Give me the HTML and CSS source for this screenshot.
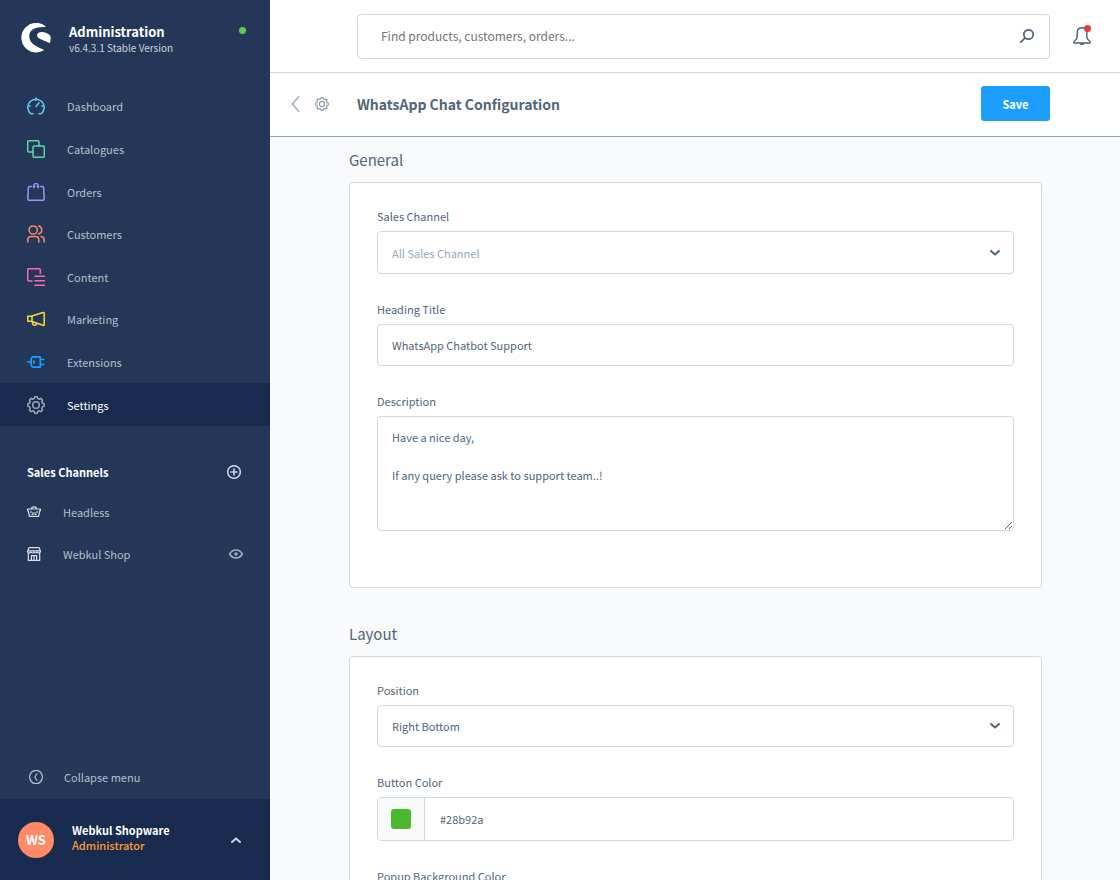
FILE: index.html
```html
<!DOCTYPE html>
<html lang="en">
<head>
<meta charset="utf-8">
<title>WhatsApp Chat Configuration</title>
<link rel="stylesheet" href="styles.css">
</head>
<body>
<svg class="sprite" aria-hidden="true">
  <symbol id="gear" viewBox="0 0 24 24">
    <path d="M9.8 3.3L10.2 1.1H13.8L14.2 3.3L16.6 4.3L18.43 3.02L20.98 5.57L19.7 7.4L20.7 9.8L22.9 10.2V13.8L20.7 14.2L19.7 16.6L20.98 18.43L18.43 20.98L16.6 19.7L14.2 20.7L13.8 22.9H10.2L9.8 20.7L7.4 19.7L5.57 20.98L3.02 18.43L4.3 16.6L3.3 14.2L1.1 13.8V10.2L3.3 9.8L4.3 7.4L3.02 5.57L5.57 3.02L7.4 4.3Z"/>
    <circle cx="12" cy="12" r="4.4"/>
  </symbol>
  <symbol id="chevron" viewBox="0 0 10 6"><path d="M1 1L5 4.6L9 1"/></symbol>
</svg>

<aside class="sidebar">
  <header class="brand">
    <svg class="brand-logo" viewBox="0 0 30 30" aria-hidden="true">
      <path d="M24.6 3.3A14.8 14.8 0 1 0 23.3 27C18 24.6 8.5 21.5 8.2 13.5C8 6.5 15 3.4 24.6 4Z"/>
      <path d="M16 12C16 9.5 20 8.6 23 9.2C26.5 10 29 11.5 29.6 13.5C29.9 16 29.5 18 28.7 20.2C25 18 20 17 17.5 15C16.5 14.2 16 13.2 16 12Z"/>
    </svg>
    <div class="brand-text">
      <span class="brand-name">Administration</span>
      <span class="brand-version">v6.4.3.1 Stable Version</span>
    </div>
    <span class="status-dot"></span>
  </header>

  <nav class="menu">
    <a class="menu-item" href="#"><svg class="icon icon-cyan" viewBox="0 0 18 18"><path d="M6 16.7H3.8A8.2 8.2 0 1 1 14.2 16.7H12M9 1v2.2M1 9h2.2M14.8 9H17M9 9.4l3-3.6"/></svg>Dashboard</a>
    <a class="menu-item" href="#"><svg class="icon icon-green" viewBox="0 0 18 18"><rect x="6" y="6" width="11.3" height="11.3" rx="1.3"/><path d="M6 12H2Q.7 12 .7 10.7V2Q.7.7 2 .7H10.7Q12 .7 12 2V6"/></svg>Catalogues</a>
    <a class="menu-item" href="#"><svg class="icon icon-purple" viewBox="0 0 18 18"><path d="M4.6 3.4H2.6Q1.5 3.4 1.4 4.5L.8 15.8Q.8 17.3 2.2 17.3H15.8Q17.2 17.3 17.2 15.8L16.6 4.5Q16.5 3.4 15.4 3.4H13.4M6.8 4.7V2.8A2.2 2.2 0 0 1 11.2 2.8V4.7M6.8 3.4h1M10.2 3.4h1"/></svg>Orders</a>
    <a class="menu-item" href="#"><svg class="icon icon-orange" viewBox="0 0 18 18"><circle cx="6.2" cy="5" r="4.1"/><path d="M.8 17V15Q.8 11.6 4.2 11.6H8.4Q11.8 11.6 11.8 15V17M11.6 1A4.1 4.1 0 0 1 11.6 9M14 11.6Q17.2 12 17.2 15.2V17"/></svg>Customers</a>
    <a class="menu-item" href="#"><svg class="icon icon-pink" viewBox="0 0 18 18"><path d="M5 13H2Q.7 13 .7 11.7V2Q.7.7 2 .7H12Q13.3.7 13.3 2V5.2M8 8.3H18M8 12.8H18M8 17.3H18"/></svg>Content</a>
    <a class="menu-item" href="#"><svg class="icon icon-yellow" viewBox="0 0 18 18"><path d="M5 6L16 2.5Q17.2 2.2 17.2 3.4V14.5Q17.2 15.7 16 15.3L5 11.5ZM5 6.3H.8V11.2H5M5.5 11.8V13.6Q5.8 15.2 8 15.2Q9.6 15 9.6 13.2"/></svg>Marketing</a>
    <a class="menu-item" href="#"><svg class="icon icon-blue" viewBox="0 0 18 18"><path d="M.3 9H4M6 3.9H13.3V14.1H6Q4.2 13.5 4.2 11.8V6.2Q4.2 4.5 6 3.9ZM13.3 6.5H16.8M13.3 11.5H16.8M6.9 8v2"/></svg>Extensions</a>
    <a class="menu-item is-active" href="#"><svg class="icon icon-grey"><use href="#gear"/></svg>Settings</a>
  </nav>

  <section class="channels">
    <div class="channels-head">
      <h2 class="channels-title">Sales Channels</h2>
      <button class="icon-button" type="button" aria-label="Add sales channel"><svg class="icon-small stroke-heavy" viewBox="0 0 14 14"><circle cx="7" cy="7" r="6.3"/><path d="M7 4v6M4 7h6"/></svg></button>
    </div>
    <a class="channel" href="#"><svg class="icon-small" viewBox="0 0 14 14"><path d="M.6 4H13.4V5.6H12.8L11.6 11.4H2.4L1.2 5.6H.6ZM4.6 4V3.4Q4.6 1.8 7 1.8T9.4 3.4V4M4 6.4v1M6 7.6v1M8 7.6v1M10 6.4v1M5 9.3h1M8 9.3h1"/></svg>Headless</a>
    <a class="channel" href="#"><svg class="icon-small" viewBox="0 0 14 14"><path d="M1.3 6V13.4H12.7V6M2 .6H12L13.4 4V5Q12 7 10.2 5.2Q8.6 6.8 7 5.2Q5.4 6.8 3.8 5.2Q2 7 .6 5V4ZM.8 3.8H13.2M4.4 13V8.6H9.6V13M7 8.6V13"/></svg><span class="channel-name">Webkul Shop</span><svg class="icon-eye" viewBox="0 0 14 10"><path d="M.6 5Q3 1 7 1T13.4 5Q11 9 7 9T.6 5Z"/><circle cx="7" cy="5" r="1"/></svg></a>
  </section>

  <button class="collapse" type="button"><svg class="icon-small" viewBox="0 0 14 14"><ellipse cx="7" cy="7" rx="6.4" ry="6.7"/><path d="M7.8 3.8L5.9 7L7.8 10.2"/></svg>Collapse menu</button>

  <button class="user" type="button">
    <span class="avatar">WS</span>
    <span class="user-text">
      <span class="user-name">Webkul Shopware</span>
      <span class="user-role">Administrator</span>
    </span>
    <svg class="chevron chevron-up"><use href="#chevron"/></svg>
  </button>
</aside>

<div class="page">
  <header class="topbar">
    <form class="search">
      <input class="search-input" type="search" aria-label="Search" placeholder="Find products, customers, orders...">
      <button class="icon-button" type="submit" aria-label="Search"><svg class="icon-small icon-search" viewBox="0 0 14 14"><circle cx="8.5" cy="5.5" r="4.7"/><path d="M5.1 8.9L.8 13.2"/></svg></button>
    </form>
    <button class="icon-button bell" type="button" aria-label="Notifications"><svg class="icon-bell" viewBox="0 0 18 18"><path d="M9 .8Q13.8.8 13.8 6V9.4Q13.8 11.6 15.6 13Q17.3 14.2 17.2 15.9H.8Q.7 14.2 2.4 13Q4.2 11.6 4.2 9.4V6Q4.2.8 9 .8ZM7.2 16.4Q9 18.2 10.8 16.4"/></svg><span class="bell-dot"></span></button>
  </header>

  <div class="titlebar">
    <nav class="title-nav">
      <a class="back" href="#" aria-label="Back"><svg class="icon-back" viewBox="0 0 8 16"><path d="M7.5.7L.8 8L7.5 15.3"/></svg></a>
      <a class="back" href="#" aria-label="Settings"><svg class="icon-small"><use href="#gear"/></svg></a>
    </nav>
    <h1 class="title">WhatsApp Chat Configuration</h1>
    <button class="save" type="submit" form="config">Save</button>
  </div>

  <main class="content">
    <form class="config" id="config">
      <section class="group">
        <h2 class="group-title">General</h2>
        <div class="card">
          <div class="field">
            <label class="label" for="channel">Sales Channel</label>
            <div class="select-wrap">
              <select class="control control-entity" id="channel"><option>All Sales Channel</option></select>
              <svg class="chevron select-chevron"><use href="#chevron"/></svg>
            </div>
          </div>
          <div class="field">
            <label class="label" for="heading">Heading Title</label>
            <input class="control" id="heading" type="text" value="WhatsApp Chatbot Support">
          </div>
          <div class="field">
            <label class="label" for="description">Description</label>
            <textarea class="control control-area" id="description">Have a nice day,

If any query please ask to support team..!</textarea>
          </div>
        </div>
      </section>

      <section class="group">
        <h2 class="group-title">Layout</h2>
        <div class="card">
          <div class="field">
            <label class="label" for="position">Position</label>
            <div class="select-wrap">
              <select class="control" id="position"><option>Right Bottom</option></select>
              <svg class="chevron select-chevron"><use href="#chevron"/></svg>
            </div>
          </div>
          <div class="field">
            <label class="label" for="button-color">Button Color</label>
            <div class="color">
              <button class="color-picker" type="button" aria-label="Pick button color"><span class="swatch"></span></button>
              <input class="color-input" id="button-color" type="text" value="#28b92a">
            </div>
          </div>
          <div class="field">
            <label class="label" for="popup-color">Popup Background Color</label>
            <div class="color">
              <button class="color-picker" type="button" aria-label="Pick popup background color"><span class="swatch"></span></button>
              <input class="color-input" id="popup-color" type="text">
            </div>
          </div>
        </div>
      </section>
    </form>
  </main>
</div>
</body>
</html>
```

FILE: styles.css
```css
* { box-sizing: border-box; }

body {
  margin: 0;
  display: flex;
  height: 100vh;
  overflow: hidden;
  background: #f9fafb;
  color: #52667a;
  font: 11px/18px "Noto Sans CJK SC", "Noto Sans", sans-serif;
}

h1, h2 { margin: 0; font-weight: 400; }
a { color: inherit; text-decoration: none; }
button, input, select, textarea { font: inherit; color: inherit; }
button { border: 0; padding: 0; background: none; text-align: left; cursor: pointer; }
svg { display: block; flex: none; fill: none; stroke: currentColor; stroke-linecap: round; stroke-linejoin: round; }

.sprite { position: absolute; width: 0; height: 0; }

/* Sidebar */
.sidebar {
  flex: none;
  width: 270px;
  display: flex;
  flex-direction: column;
  background: #243758;
  color: #b3bfcc;
}

.brand { display: flex; align-items: flex-start; padding: 23px 24px 0 21px; height: 85px; }
.brand-logo { width: 30px; height: 30px; fill: #fff; stroke: none; }
.brand-text { flex: 1; display: flex; flex-direction: column; margin-left: 18px; }
.brand-name { color: #fff; font-size: 13px; font-weight: 700; }
.brand-version { color: #c8d1dc; font-size: 10px; line-height: 14px; }
.status-dot { width: 7px; height: 7px; margin-top: 4px; border-radius: 50%; background: #54d142; }

.menu { display: grid; grid-auto-rows: 1fr; height: 341px; }
.menu-item { display: flex; align-items: center; gap: 22px; padding-left: 27px; }
.menu-item.is-active { background: #182a4d; color: #fff; }

.icon { width: 18px; height: 18px; stroke-width: 1.5px; }
.icon-cyan { color: #62cbe8; }
.icon-green { color: #57d9a3; }
.icon-purple { color: #a092f0; }
.icon-orange { color: #f88962; }
.icon-pink { color: #ff68b4; }
.icon-yellow { color: #ffd53d; }
.icon-blue { color: #189eff; stroke-width: 1.7px; }
.icon-grey { color: #9aa8b5; stroke-width: 2px; }
.icon-small { width: 14px; height: 14px; stroke-width: 1.2px; }
.stroke-heavy { stroke-width: 1.6px; }
.icon-button { display: flex; }

.channels { padding: 26px 27px 0; }
.channels-head { display: flex; align-items: center; justify-content: space-between; height: 39px; padding-right: 2px; color: #fff; }
.channels-head .icon-button { color: #c8d4e6; }
.channels-title { font-size: 11px; font-weight: 700; }
.channel { display: flex; align-items: center; gap: 22px; height: 42px; }
.channel .icon-small { color: #d8e0ea; }
.channel-name { flex: 1; }
.icon-eye { width: 14px; height: 10px; stroke-width: 1.5px; color: #9fb0c6; }

.collapse { display: flex; align-items: center; gap: 21px; height: 43px; margin-top: auto; padding: 0 0 1px 29px; }

.user { display: flex; align-items: center; gap: 18px; padding: 0 29px 0 18px; height: 81px; background: #182a4d; }
.avatar { width: 36px; height: 36px; border-radius: 50%; background: #ff8a65; color: #fff; font-size: 13px; font-weight: 700; line-height: 36px; text-align: center; }
.user-text { flex: 1; display: flex; flex-direction: column; padding-bottom: 6px; }
.user-name { color: #fff; font-weight: 700; line-height: 16px; }
.user-role { color: #ff9a33; font-weight: 500; line-height: 14px; }

.chevron { width: 10px; height: 6px; stroke-width: 2px; }
.chevron-up { transform: rotate(180deg); color: #c8d4e6; }

/* Top bar */
.page { flex: 1; min-width: 0; display: flex; flex-direction: column; }

.topbar { flex: none; display: flex; align-items: center; height: 73px; padding: 0 29px 0 87px; background: #fff; border-bottom: 1px solid #cfd9e2; }
.search { flex: 1; display: flex; align-items: center; height: 45px; padding: 0 15px 0 23px; border: 1px solid #cfd9e2; border-radius: 4px; }
.search-input { flex: 1; min-width: 0; padding: 0; border: 0; outline: 0; background: none; font-size: 12px; appearance: none; }
.search-input::placeholder { color: #757575; }
.icon-search { stroke-width: 1.7px; }
.bell { position: relative; margin-left: 23px; }
.icon-bell { width: 18px; height: 18px; stroke-width: 1.5px; }
.bell-dot { position: absolute; top: -2px; right: 0; width: 7px; height: 7px; border-radius: 50%; background: #e23b4b; }

.titlebar { flex: none; display: flex; align-items: center; height: 64px; padding: 0 70px 2px 0; background: #fff; border-bottom: 1px solid #94a5b5; }
.title-nav { flex: none; display: flex; align-items: center; gap: 15px; width: 87px; padding-left: 21px; }
.back { color: #8f9fb0; }
.back .icon-small { stroke-width: 2px; }
.icon-back { width: 9px; height: 16px; stroke-width: 1.2px; }
.title { flex: 1; font-size: 14px; line-height: 22px; font-weight: 700; }
.save { width: 69px; height: 35px; border-radius: 3px; background: #1d9eff; color: #fff; font-weight: 700; text-align: center; }

/* Configuration form */
.content { flex: 1; min-height: 0; overflow: hidden; padding: 12px 78px 0 79px; }
.group { margin-bottom: 35px; }
.group-title { margin-bottom: 11px; font-size: 15px; line-height: 22px; }
.card { display: flex; flex-direction: column; gap: 27px; padding: 25px 27px 56px; background: #fff; border: 1px solid #cfd9e2; border-radius: 4px; }
.label { display: block; margin-bottom: 7px; line-height: 16px; }

.control { display: block; width: 100%; height: 42px; padding: 0 14px; border: 1px solid #cfd9e2; border-radius: 4px; background: #fff; outline: 0; appearance: none; }
.control-entity { height: 43px; color: #98a9b9; }
.control-area { height: 115px; padding: 11px 14px; line-height: 19px; resize: vertical; }
.select-wrap { position: relative; }
.select-chevron { position: absolute; top: 50%; right: 14px; margin-top: -3px; pointer-events: none; }

.color { display: flex; height: 44px; border: 1px solid #cfd9e2; border-radius: 4px; overflow: hidden; }
.color-picker { display: grid; place-items: center; width: 47px; background: #f9fafb; border-right: 1px solid #cfd9e2; }
.swatch { width: 20px; height: 20px; border-radius: 3px; background: #4bb92f; }
.color-input { flex: 1; min-width: 0; padding: 0 15px; border: 0; outline: 0; background: #fff; }
```
